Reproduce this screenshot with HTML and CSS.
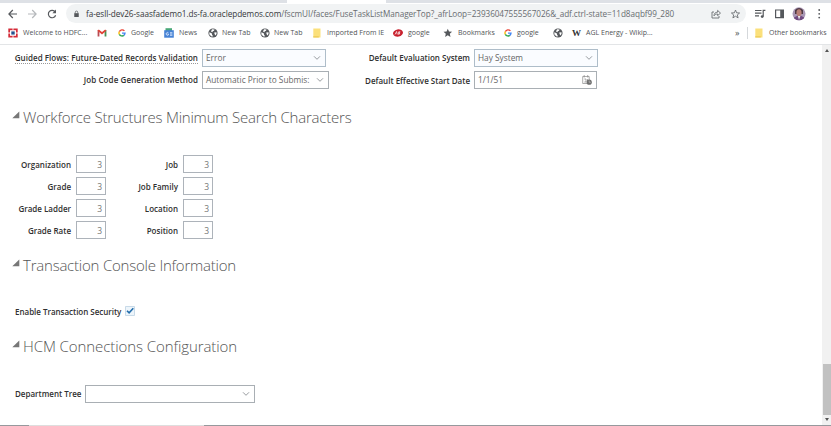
FILE: index.html
```html
<!DOCTYPE html>
<html lang="en">
<head>
<meta charset="utf-8">
<title>Manage Enterprise HCM Information</title>
<link rel="stylesheet" href="styles.css">
</head>
<body>
<svg width="0" height="0" class="defs">
  <symbol id="globe" viewBox="0 0 10 10"><circle cx="5" cy="5" r="4.6" fill="#55585c"/><path d="M1.3 4.2 3.7 5.2 4.2 7 5.2 8.3 3.6 8.4 1.4 6.6ZM4 1.3 6.6 1.4 6 2.8 4.8 3.2 4.4 4.2 3 3.5ZM6.2 4.4 8.5 4.2 8.5 6 7.3 7.4 6.6 6Z" fill="#fff"/></symbol>
  <symbol id="google" viewBox="0 0 10 10"><g fill="none" stroke-width="1.7"><path d="M8 2.4A3.8 3.8 0 0 0 1.7 3.3" stroke="#ea4335"/><path d="M1.7 3.2A3.8 3.8 0 0 0 1.7 6.8" stroke="#fbbc05"/><path d="M1.7 6.7A3.8 3.8 0 0 0 7.4 8" stroke="#34a853"/><path d="M7.3 8A3.8 3.8 0 0 0 8.8 5.1H5" stroke="#4285f4"/></g></symbol>
  <symbol id="folder" viewBox="0 0 8 10"><path d="M.3.5H7.5V9.5H.3Z" fill="#fbe07b"/><path d="M.3 8.2H5.8V9.5H.3Z" fill="#eccb58"/></symbol>
  <symbol id="chevron" viewBox="0 0 8 6"><path d="M1 1.3 4 4.3 7 1.3" fill="none" stroke="#8b9094" stroke-width=".9"/></symbol>
  <symbol id="disclose" viewBox="0 0 8 8"><path d="M7.3.5V7.2H.3Z" fill="#777"/></symbol>
</svg>
<div class="window">
  <div class="tabstrip"><div class="tab"></div></div>
  <div class="toolbar">
    <svg class="nav" viewBox="0 0 54 12"><g fill="none" stroke-width="1.2"><path d="M9 6H1M4.8 2 .9 6 4.8 10" stroke="#55585c"/><path d="M20 6H28M24.2 2 28.1 6 24.2 10" stroke="#b5b8bb"/><path d="M47.2 4A3.7 3.7 0 1 0 47.6 7.2" stroke="#55585c"/></g><path d="M48 1.6V5.2H44.4Z" fill="#55585c"/></svg>
    <div class="address">
      <svg class="lock" viewBox="0 0 6 8"><path d="M.3 3H5.7V7.6H.3Z" fill="#55585c"/><path d="M1.5 3.3V2A1.5 1.5 0 0 1 4.5 2V3.3" fill="none" stroke="#55585c" stroke-width=".9"/></svg>
      <span class="url"><b>fa-esll-dev26-saasfademo1.ds-fa.oraclepdemos.com</b>/fscmUI/faces/FuseTaskListManagerTop?_afrLoop=23936047555567026&amp;_adf.ctrl-state=11d8aqbf99_280</span>
      <svg class="share" viewBox="0 0 30 10"><g fill="none" stroke="#6b6f73" stroke-width=".9"><path d="M3 3H1V9H8V7"/><path d="M3 6.8C3 4.3 4.5 3.3 6.6 3.2V1.4L9.5 4.1 6.6 6.6V5C5 5 4 5.6 3 6.8Z"/><path d="M24.5 1 25.6 3.8 28.6 4 26.3 5.9 27.1 8.9 24.5 7.2 21.9 8.9 22.7 5.9 20.4 4 23.4 3.8Z"/></g></svg>
    </div>
    <svg class="actions" viewBox="0 0 70 14"><g fill="none" stroke="#55585c" stroke-width="1.2"><path d="M0 3.5H6.5M0 6.2H6.5M0 8.9H4M8.2 9.5V3.4H10.4"/><path d="M20.6 3H28.4V10.7H20.6Z"/></g><circle cx="7.2" cy="9.6" r="1.4" fill="#55585c"/><path d="M25.2 3H28.5V10.6H25.2Z" fill="#55585c"/><clipPath id="face"><circle cx="44" cy="6.8" r="6.5"/></clipPath><g clip-path="url(#face)"><path d="M37 0H51V14H37Z" fill="#a997b5"/><path d="M40 3Q44-1 48 3V7H40Z" fill="#4e3943"/><ellipse cx="44" cy="5.7" rx="2.6" ry="3.5" fill="#b98078"/><path d="M38 14 39 10.5 42.5 8.8 44 11 46 8.8 50 11V14Z" fill="#704a80"/><path d="m43 9 1 4 1.2-4Z" fill="#eee"/></g><g fill="#55585c"><circle cx="64.2" cy="3" r=".9"/><circle cx="64.2" cy="6.8" r=".9"/><circle cx="64.2" cy="10.6" r=".9"/></g></svg>
  </div>
  <div class="bookmarks">
    <div class="mark hdfc"><svg viewBox="0 0 10 10"><path d="M.3.5H9.7V9.5H.3Z" fill="#d52b38"/><path d="M2 2.2H8V7.8H2Z" fill="#fff"/><path d="M3.3 3.4H6.7V6.6H3.3Z" fill="#24518f"/><path d="M4.6 0H5.4V2.2H4.6ZM4.6 7.8H5.4V10H4.6ZM0 4.6H2V5.4H0ZM8 4.6H10V5.4H8Z" fill="#fff"/></svg><span>Welcome to HDFC...</span></div>
    <div class="mark"><svg viewBox="0 0 10 10"><path d="M1.5 8.5V2" stroke="#b94b54" stroke-width="1.8"/><path d="M8.5 8.5V2" stroke="#4a9355" stroke-width="1.8"/><path d="M1.2 2.1 5 5.3 8.8 2.1" fill="none" stroke="#e04438" stroke-width="1.8"/></svg></div>
    <div class="mark google"><svg class="narrow" viewBox="0 0 10 10"><use href="#google"/></svg><span>Google</span></div>
    <div class="mark news"><svg viewBox="0 0 10 10"><path d="M1.5.2H8V3H1.5Z" fill="#48a878"/><path d="M.2 2.2H9.8V9.7H.2Z" fill="#4682d5"/><path d="M4.4 4.8A1.4 1.4 0 1 0 4.4 7V6H3.3M6 4.7H8.4M6 6H8.4M6 7.3H8.4" fill="none" stroke="#e6f0ff" stroke-width=".8"/></svg><span>News</span></div>
    <div class="mark newtab"><svg viewBox="0 0 10 10"><use href="#globe"/></svg><span>New Tab</span></div>
    <div class="mark newtab"><svg viewBox="0 0 10 10"><use href="#globe"/></svg><span>New Tab</span></div>
    <div class="mark imported"><svg class="narrow" viewBox="0 0 8 10"><use href="#folder"/></svg><span>Imported From IE</span></div>
    <div class="mark google"><svg viewBox="0 0 10 10"><ellipse cx="5" cy="5" rx="5" ry="3.7" fill="#c8202d" transform="rotate(-12 5 5)"/><path d="M2 6.5 3.6 3.5 4.2 6.4M5.2 6.3 5.7 3.8Q8.5 3.3 6 5 8.5 5.7 5.2 6.3" stroke="#fff" stroke-width=".7" fill="none"/></svg><span>google</span></div>
    <div class="mark marks"><svg viewBox="0 0 10 10"><path d="M4.8.7 6 3.5 9.1 3.8 6.8 5.8 7.5 8.9 4.8 7.3 2.1 8.9 2.8 5.8.5 3.8 3.6 3.5Z" fill="#55585c"/></svg><span>Bookmarks</span></div>
    <div class="mark google"><svg class="narrow" viewBox="0 0 10 10"><use href="#google"/></svg><span>google</span></div>
    <div class="mark"><svg viewBox="0 0 10 10"><use href="#globe"/></svg></div>
    <div class="mark agl"><i>W</i><span>AGL Energy - Wikip...</span></div>
    <div class="mark more">»</div>
    <div class="mark other"><svg class="narrow" viewBox="0 0 8 10"><use href="#folder"/></svg><span>Other bookmarks</span></div>
  </div>
  <div class="viewport">
    <main>
      <div class="settings">
        <label class="l1"><u>Guided Flows: Future-Dated Records Validation</u></label>
        <div class="field shaded"><span>Error</span><svg class="chev" viewBox="0 0 8 6"><use href="#chevron"/></svg></div>
        <label class="l2">Default Evaluation System</label>
        <div class="field shaded right"><span>Hay System</span><svg class="chev" viewBox="0 0 8 6"><use href="#chevron"/></svg></div>
        <label class="l3">Job Code Generation Method</label>
        <div class="field wide"><span>Automatic Prior to Submis:</span><svg class="chev" viewBox="0 0 8 6"><use href="#chevron"/></svg></div>
        <label class="l4">Default Effective Start Date</label>
        <div class="field date right"><span>1/1/51</span><svg class="cal" viewBox="0 0 10 10"><path d="M.7 1.5H7.2V8.5H.7ZM2.2 0V2.5M5.7 0V2.5M2.3 4H4V7H2.3M5.5 4V6" fill="none" stroke="#888" stroke-width=".7"/><circle cx="7.2" cy="7.2" r="2.6" fill="#707070"/><path d="M7.2 5.5V7.3H8.8" fill="none" stroke="#ddd" stroke-width=".5"/></svg></div>
      </div>
      <h2 class="workforce"><svg viewBox="0 0 8 8"><use href="#disclose"/></svg><span>Workforce Structures Minimum Search Characters</span></h2>
      <div class="counts">
        <label>Organization</label><div class="num">3</div><label>Job</label><div class="num">3</div>
        <label>Grade</label><div class="num">3</div><label>Job Family</label><div class="num">3</div>
        <label>Grade Ladder</label><div class="num">3</div><label>Location</label><div class="num">3</div>
        <label>Grade Rate</label><div class="num">3</div><label>Position</label><div class="num">3</div>
      </div>
      <h2 class="console"><svg viewBox="0 0 8 8"><use href="#disclose"/></svg><span>Transaction Console Information</span></h2>
      <div class="security"><label>Enable Transaction Security</label><svg viewBox="0 0 10 10"><path d="M.5.5H9.5V9.5H.5Z" fill="#edf5fb" stroke="#bdd2e2" stroke-width=".8"/><path d="M2 4.7 4.1 6.9 8.3 2.2" fill="none" stroke="#246eac" stroke-width="1.6"/></svg></div>
      <h2 class="hcm"><svg viewBox="0 0 8 8"><use href="#disclose"/></svg><span>HCM Connections Configuration</span></h2>
      <div class="department"><label>Department Tree</label><div class="field"><svg class="chev" viewBox="0 0 8 6"><use href="#chevron"/></svg></div></div>
    </main>
    <div class="scrollbar"><i class="up"></i><div class="thumb"></div><i class="down"></i></div>
  </div>
  <div class="edge"><div></div></div>
</div>
</body>
</html>
```

FILE: styles.css
```css
* { box-sizing: border-box; }
body { margin: 0; overflow: hidden; background: #fff; font: 8px/12px "Open Sans", "Noto Sans", sans-serif; color: #333; }
svg { display: block; flex: none; }
.defs { position: absolute; }
span, label, u { white-space: nowrap; }
.window { width: 831px; height: 426px; display: flex; flex-direction: column; }

.tabstrip { height: 3px; background: #dee1e6; padding-left: 287px; flex: none; }
.tab { width: 99px; height: 3px; background: #fff; }
.toolbar { height: 21px; display: flex; align-items: center; padding-left: 8px; flex: none; }
.nav { width: 54px; height: 12px; margin-right: 4px; }
.address { width: 680px; height: 19px; border-radius: 10px; background: #f1f3f4; display: flex; align-items: center; padding-left: 8px; }
.lock { width: 5px; height: 8px; margin-right: 7px; }
.url { width: 590px; font-size: 8.2px; color: #686c70; letter-spacing: -.06px; }
.url b { font-weight: 400; color: #34373a; }
.share { width: 30px; height: 10px; margin-left: 35px; }
.actions { width: 70px; height: 14px; margin-left: 9px; }

.bookmarks { height: 21px; flex: none; border-bottom: 1px solid #e3e5e7; padding: 0 0 2px 8px; display: grid; grid-template-columns: 89px 21px 46px 44px 52px 53px 80px 50px 61px 49px 19px 163px 13px 83px; align-items: center; font-size: 7px; color: #505356; }
.mark { display: flex; align-items: center; gap: 5px; }
.mark svg { width: 10px; height: 10px; }
.mark svg.narrow { width: 8px; }
.newtab { gap: 4px; }
.imported { gap: 6px; }
.mark i { font: bold 9px/10px "Liberation Serif", serif; width: 9px; color: #333; }
.more { font-size: 9px; }
.other { border-left: 1px solid #d5d8db; padding-left: 7px; margin-left: -1px; gap: 6px; }

.viewport { height: 380px; display: flex; flex: none; }
main { width: 822px; padding-top: 4px; }
label { font-weight: 600; color: #303030; text-align: right; }
.settings { display: grid; grid-template-columns: 198px 127px 137px 124px; column-gap: 4px; grid-auto-rows: 18px; row-gap: 4px; align-items: center; }
.settings label u { text-decoration: none; border-bottom: 1px dotted #999; }
.field { height: 18px; border: 1px solid #a9afb4; display: flex; align-items: center; justify-content: space-between; padding: 0 4px 0 3px; color: #666; background: #fff; font-size: 8.3px; }
.settings .field { width: 124px; }
.settings .wide { width: 127px; }
.settings .date { width: 123px; }
.l1 { letter-spacing: .04px; }
.l3 { letter-spacing: .1px; }
.l4 { padding-top: 2px; }
.shaded { background: #fafcff; border-color: #aebdc9; }
.chev { width: 8px; height: 6px; }
.cal { width: 10px; height: 10px; }
h2 { margin: 0; height: 24px; display: flex; align-items: center; padding-left: 12px; gap: 3px; font-size: 15px; line-height: 24px; font-weight: 300; letter-spacing: -.22px; color: #555; }
h2 svg { width: 8px; height: 8px; margin-top: -4px; }
.workforce { margin-top: 16px; }
.counts { margin-top: 26px; display: grid; grid-template-columns: 72px 30px 69px 30px; column-gap: 4px; grid-auto-rows: 18px; row-gap: 4px; align-items: center; }
.counts label { padding: 1px 1px 0 0; }
.num { height: 18px; border: 1px solid #adb3ba; text-align: right; padding: 3px 3px 0 0; color: #777; font-size: 8.5px; }
.console { margin-top: 14px; }
.security { margin-top: 27px; height: 16px; padding-left: 15px; display: flex; align-items: center; gap: 4px; letter-spacing: -.02px; }
.security svg { width: 10px; height: 10px; margin-top: -3px; }
.hcm { margin-top: 14px; letter-spacing: -.08px; }
.department { margin-top: 27px; padding-left: 15px; display: flex; align-items: center; gap: 4px; }
.department .field { width: 170px; justify-content: flex-end; }
.scrollbar { width: 9px; background: #f1f1f1; display: flex; flex-direction: column; align-items: center; }
.up, .down { width: 0; height: 0; border: 2px solid transparent; }
.up { border-top: 0; border-bottom: 3px solid #555; margin-top: 4px; }
.down { border-bottom: 0; border-top: 3px solid #555; margin-top: 3px; }
.thumb { width: 8px; height: 51px; margin: 312px 0 0 1px; background: #c1c1c1; }
.edge { height: 1px; background: #96999d; padding-left: 29px; }
.edge div { width: 175px; height: 1px; background: #dedede; }
```
